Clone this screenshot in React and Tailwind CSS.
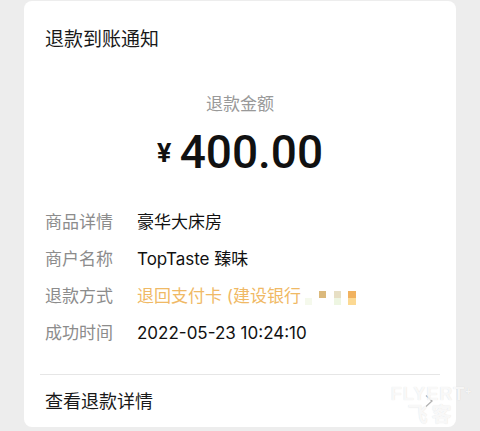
import React from 'react';

const rows = [
  { label: '商品详情', value: '豪华大床房' },
  { label: '商户名称', value: 'TopTaste 臻味' },
  { label: '退款方式', value: '退回支付卡 (建设银行', orange: true },
  { label: '成功时间', value: '2022-05-23 10:24:10' },
];

// mosaic left over from the blurred card number
const Mosaic = () => (
  <span className="relative ml-[4px] inline-block h-[16px] w-[52px] align-middle">
    <span className="absolute left-[0px] top-[9px] h-[7px] w-[7px] bg-[#f5f9ec]" />
    <span className="absolute left-[14px] top-[2px] h-[7px] w-[7px] bg-[#dbb97c]" />
    <span className="absolute left-[29px] top-[2px] h-[7px] w-[7px] bg-[#e7dfc4]" />
    <span className="absolute left-[29px] top-[9px] h-[7px] w-[7px] bg-[#eef6e2]" />
    <span className="absolute left-[43px] top-[2px] h-[7px] w-[8px] bg-[#f1b25f]" />
    <span className="absolute left-[43px] top-[9px] h-[7px] w-[8px] bg-[#fcd993]" />
  </span>
);

export default function App() {
  return (
    <div
      className="relative min-h-[431px] bg-[#ededed] px-[24px] pt-[1px]"
      style={{ fontFamily: 'Inter, "Noto Sans CJK SC", sans-serif' }}
    >
      <div className="rounded-lg bg-white">
        <div className="pl-[21px] pt-[27px] text-[19px] leading-[24px] text-[#191919]">退款到账通知</div>

        <div className="mt-[40px] text-center text-[17px] leading-[24px] text-[#999999]">退款金额</div>
        <div className="mt-[8px] flex h-[56px] items-center justify-center text-[#111111]">
          <span className="mr-[8px] mt-[2px] text-[26px] font-bold leading-none">¥</span>
          <span className="text-[46px] font-medium leading-none" style={{ fontFamily: 'Roboto, sans-serif' }}>
            400.00
          </span>
        </div>

        <div className="mt-[24px] px-[21px]">
          {rows.map((r) => (
            <div key={r.label} className="flex h-[37px] items-center text-[17px]">
              <span className="w-[92px] shrink-0 text-[#8c8c8c]">{r.label}</span>
              <span className={r.orange ? 'flex items-center text-[#f0b965]' : 'text-[#111111]'}>
                {r.value}
                {r.orange && <Mosaic />}
              </span>
            </div>
          ))}
        </div>

        <div className="mx-[16px] mt-[22px] h-px bg-[#e6e6e6]" />

        <div className="flex h-[52px] items-center justify-between pl-[21px] pr-[22px]">
          <span className="text-[18px] text-[#191919]">查看退款详情</span>
          <svg width="10" height="14" viewBox="0 0 10 14" fill="none">
            <path d="M2 1.5 L8 7 L2 12.5" stroke="#b3b3b3" strokeWidth="1.3" />
          </svg>
        </div>
      </div>

      <div className="pointer-events-none absolute right-[8px] top-[385px] flex flex-col items-center text-white/80 [text-shadow:0_0_1px_rgba(0,0,0,0.15)]">
        <span className="text-[18px] font-bold leading-none tracking-[1px]" style={{ fontFamily: '"Liberation Sans", sans-serif' }}>
          FLYERT<sup className="text-[10px]">+</sup>
        </span>
        <span className="mt-[2px] text-[20px] font-bold leading-none tracking-[4px]">飞客</span>
      </div>
    </div>
  );
}
